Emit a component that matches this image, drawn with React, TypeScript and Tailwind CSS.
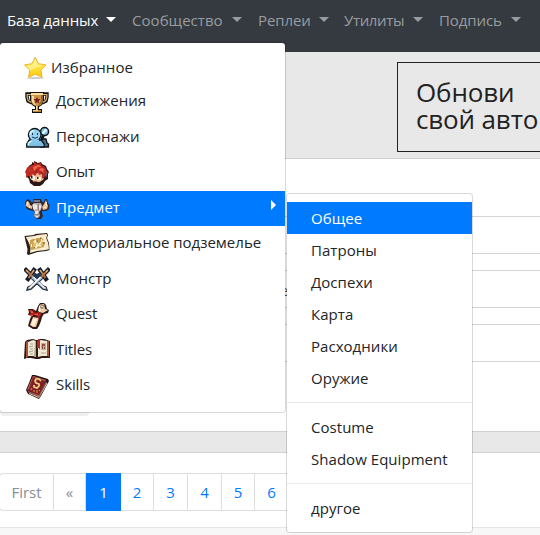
import type { ReactNode } from "react";

const nav = [
  { label: "База данных", box: "w-[125px]", text: "w-[90px] tracking-[-0.1px]", on: true },
  { label: "Сообщество", box: "w-[126px]", text: "w-[91px] tracking-[0.05px]" },
  { label: "Реплеи", box: "w-[86px]", text: "w-[52px] tracking-[-0.1px]" },
  { label: "Утилиты", box: "w-[95px]", text: "w-[60px] tracking-[-0.35px]" },
  { label: "Подпись", box: "w-[95px]", text: "w-[63px] tracking-[-0.1px]" },
];

function Sprite({ children }: { children: ReactNode }) {
  return (
    <svg className="mt-1 h-7 w-[26px] shrink-0" viewBox="0 0 26 28">
      {children}
    </svg>
  );
}

const Star = () => (
  <svg className="h-[23px] w-[23px] shrink-0" viewBox="0 0 23 23">
    <defs>
      <linearGradient id="star" x1="0" y1="0" x2="0" y2="1">
        <stop offset="0" stopColor="#fff27a" />
        <stop offset=".5" stopColor="#ffe23c" />
        <stop offset="1" stopColor="#fbc512" />
      </linearGradient>
    </defs>
    <ellipse cx="11.5" cy="22" rx="8.5" ry="1" fill="#ccc" />
    <path d="M11.2 1.300 14.5 7.7 22 8.9 16.9 14.1 18 21.3 11.2 18.2 4.6 21.3 5.7 14.1 .5 8.9 8 7.7Z" fill="url(#star)" stroke="#edb62b" strokeLinejoin="round" />
    <path d="M11.2 3.5 13.6 8.7 20 9.7Q12 10 6.5 15L2.8 9.7 8.8 8.7Z" fill="#fff9a8" opacity=".65" />
  </svg>
);

const Trophy = () => (
  <Sprite>
    <path d="M7 6H3v3l1 4 4 2M19 6h4v3l-1 4-4 2" fill="none" stroke="#111" strokeWidth="3.4" />
    <path d="M6 4h14v9l-2 4-3 2v2h3v4H8v-4h3v-2l-3-2-2-4Z" fill="#111" />
    <path d="M7 6.5H3.200v3l1 3 3 2M19 6.5h3.800v3l-1 3-3 2" fill="none" stroke="#dfb368" strokeWidth="1.2" />
    <path d="M7 5h12v8l-2 4-3 1v4h-2v-4l-3-1-2-4Z" fill="#c8954a" />
    <path d="M7 5h12v2H7ZM8 8h2v6l2 3h-1l-3-3ZM12 18h1v4h-1Z" fill="#f7dda0" />
    <path d="M17 7h2v6l-2 3-2 1v-1l2-3Z" fill="#96632c" />
    <path d="m13 9 1 2h2.500l-2 2 .6 2.500-2.100-1.200-2.100 1.200.6-2.500-2-2H12Z" fill="#7b1b1b" />
    <path d="M9 22h8v2H9Z" fill="#b98338" />
    <path d="M9 22h5v1H9Z" fill="#f3d58f" />
  </Sprite>
);

const Persona = () => (
  <Sprite>
    <path d="m17.5 15 4.500 0 1 4 1.500 1v3h-8Z" fill="#466f89" stroke="#10161d" strokeWidth="1.3" />
    <path d="m19.500 11-2 5" stroke="#10161d" strokeWidth="3" />
    <circle cx="20.600" cy="7.600" r="4" fill="#86c5e4" stroke="#10161d" strokeWidth="1.5" />
    <path d="M18.500 9.500 22.500 5.5" stroke="#f1fcff" strokeWidth="2" />
    <path d="M2.700 23v-3l2.500-4h12l3 4v3Z" fill="#80bfe4" stroke="#10161d" strokeWidth="1.3" />
    <circle cx="10.7" cy="10.800" r="6.300" fill="#95d2f2" stroke="#10161d" strokeWidth="1.3" />
    <path d="M6.500 15.500h8.500v4H6.500Z" fill="#85c6ea" />
    <path d="M6 11q0-4 4-4.500M4.500 21v-2l3-2" fill="none" stroke="#d3f3ff" strokeWidth="1.500" />
    <path d="M8 9h1v2H8ZM13 9h1v2h-1Z" fill="#12364d" />
    <path d="M8 13q3 2.500 6 0" fill="none" stroke="#12364d" />
  </Sprite>
);

const Head = () => (
  <Sprite>
    <path d="M8 5V3l2 1 0-2 4 2 3-1 1 2 4 2 1 3 2 3-1 2 0 5-3 2-2 3-3 2H10l-4-3-1-4-2-2 0-3-1-2 1-4 3-3Z" fill="#2b1618" />
    <path d="m6 15 12-2 2 2 0 5-4 3-6 0-3-3Z" fill="#eeb98c" />
    <path d="M6 16h5v5H8l-2-2ZM12 18h5v3h-4Z" fill="#fff5df" />
    <path d="m8 6 2 0V3l3 2 4-1 0 2 4 2 1 3 2 3-3 2-1 4-2-1 0-4-3 1-1-3-3 4-3-2-1 3-3-1-2 2 0-4-1-2 2-4Z" fill="#be2b23" />
    <path d="m9 8 5-2 5 2-5 0-4 4ZM15 11l2-2 4 1-2 1 1 3ZM5 12l3-3-1 4Z" fill="#ed664b" />
    <path d="m11 14 3-4M17 12l2 4M8 9l-2 4M16 6l4 3" stroke="#7e201d" strokeWidth=".8" />
    <path d="M7 16.500h1.500v3H7ZM13 18h1.500v2H13Z" fill="#2b1919" />
    <path d="M10 22h3v1h-3Z" fill="#a75d45" />
    <path d="m22 12 1 4-1 3-1-3Z" fill="#5a6474" />
  </Sprite>
);

const Armor = () => (
  <Sprite>
    <path d="m9 4 8 0 1 3 2 0 1-3 2 0 1 4 1.500 2-.5 4-3 2h-4l0 2 1 3-2 3-4 0-3-3 1-3-1-2-5-1-3-2 0-3-1-2 2-4 3 1 1 2 3 0Z" fill="#33262a" />
    <path d="m3 6 2 1 1 3 2 1 0 3-3-1-3-2 0-3ZM22 5l1 4 1 2-1 3-4 1-1-3 2-3Z" fill="#e8c09c" />
    <path d="M3 7h1v3H3ZM22 7h1v4h-1v-1h-1V9h1ZM5 11h1v2H5ZM20 12h2v1h-2Z" fill="#fff0cf" />
    <path d="m10 8 7 0 1 3-1 4-2 2 1 4-2 2-2 0-2-2 1-4-2-3-1-4Z" fill="#b5adb1" />
    <path d="m9 9 4 1v4l-3 1-1-2ZM15 10h2v3l-2 2ZM11 16h3v2l-2 2-1-1ZM12 21h2v1h-2Z" fill="#f1e7df" />
    <path d="M10 5h6v2h-6Z" fill="#777786" />
    <path d="M14 9h1v6h-1ZM11 19h4v1h-4Z" fill="#8b8087" />
  </Sprite>
);

const Map = () => (
  <Sprite>
    <path d="m.5 6 9.500-1 1-1 12-1 1 2-1 3 2 5 .5 7-3 1-9 1-9 3-1.500-1 .5-5-2-8Z" fill="#2b1c16" />
    <path d="m1.700 7 8-1 4-1 8.500-1 1 1-1 3 2 5 .8 6-3 1-9 1-7 2 .5-5-2-6Z" fill="#f9eacb" />
    <path d="m6 10 3-1 3 0-3 3 0 3 1 2 2 2-5 1-1-5ZM12 8l5-1 3 3-3 1-2 3-3-2ZM18 12h3l-1 5-4 1-4 1 2-3 3 1Z" fill="#c9a155" />
    <path d="m9 11 2 2 3 1-2 2-3 1ZM15 14l4-3-1 5Z" fill="#e1c057" />
    <path d="M4 9h3v1H4ZM11 7h5v1h-5ZM10 11h2v1h-2ZM15 13h2v1h-2ZM8 20h4v1H8ZM18 18h3v1h-3ZM12 14h1v3h-1ZM7 14h1v3H7ZM17 9h1v2h-1Z" fill="#fffbe0" />
    <path d="m5 14 1 2M16 8l1 1M10 17l1 1M20 12v2M13 11h1" stroke="#886421" />
  </Sprite>
);

const Swords = () => (
  <Sprite>
    <path d="m2 4 8 8M4 13l6-9M24 4l-8 8M22 13l-6-9" stroke="#191d28" strokeWidth="4.200" strokeLinecap="square" />
    <path d="m10 6 3 2 3-2 1 4-4 3-4-3Z" fill="#253650" />
    <path d="m2 4 7 7M4.500 12 10 4M24 4l-7 7M21.500 12 16 4" stroke="#b87747" strokeWidth="1.800" />
    <path d="m2 4 2 2M22 6l2-2M8.500 6.500 10 4M17.500 6.500 16 4" stroke="#f0c386" />
    <path d="m16 11-9 9-3 1-1 3 4-1 12-11M10 11l9 9 3 1 1 3-4-1L7 12" fill="#191d28" stroke="#191d28" strokeWidth="1.400" />
    <path d="m9 10 10 10 3 1 .5 2.500-3-.5L7 12Z" fill="#9fb6c9" />
    <path d="M9.500 11 20.500 22" stroke="#eff7fd" strokeWidth="1.200" />
    <path d="m17 10-10 10-3 1-.5 2.500 3-.5L19 12Z" fill="#a9bdce" stroke="#29313e" strokeWidth=".5" />
    <path d="m16.500 11-11 11" stroke="#fff" strokeWidth="1.500" />
  </Sprite>
);

const Scroll = () => (
  <Sprite>
    <path d="m14 5 2-3 4 0 2 2 1 4 2 1-1 3-4 1-2 3-1 4-2 5-2 3-4 0-5-3 2-7 2-4-4 0 1-3-1-3 5 0 3 2Z" fill="#2e1916" />
    <path d="m15 5 2-2 3 0 1 5 3 1-5 3-4-1ZM9 16l6 1-3 9H9l-3-2Z" fill="#efcda9" />
    <path d="m15 5 2 1-1 5-2-1ZM9 18l4 0-3 7-3-1Z" fill="#fff3dc" />
    <path d="m17 3 3 1-1 4-3-1Z" fill="#8f8174" />
    <path d="M17 5h2v1h-2Z" fill="#f1d8bc" />
    <path d="m5 9 4 0 2 3 3-1 4 2-2 2-1 4-2-4-3-1-4 1-1-1 2-2Z" fill="#b3221b" />
    <path d="m6 9 3 2v1H7ZM11 13h3v1h-3ZM6 14l3 0v1H7Z" fill="#f25b3e" />
  </Sprite>
);

const Book = () => (
  <Sprite>
    <path d="m1 5 2-2 6-1 3 1h2l2-1h4l3 1 3 1v17h-3l-5 0-3 1h-3l-5-1-4 0-3 1Z" fill="#2e1915" />
    <path d="m2 5 2-1v16l-2 1ZM23 4h2v16l-2-1Z" fill="#a35435" />
    <path d="m4 5 5-2 3 1v16l-3-1-5 0ZM14 4l3-1 6 1v15h-5l-4 1Z" fill="#eee8d5" />
    <path d="m11 4 1 0v16l-2-1Z" fill="#b7aa8d" />
    <path d="m6 7 3 0M5 10l4-1M6 12h3M5 15l4-1M6 17h3M17 16h5" stroke="#aaa591" />
    <path d="M17 6h5v7h-5Z" fill="#d7a783" />
    <path d="M18 7h3v2h-2v3h-1ZM20 10h1v2h-1Z" fill="#895444" />
    <path d="M14 2h2v11l-1-2h-2V4h1Z" fill="#b92824" />
  </Sprite>
);

const Skills = () => (
  <Sprite>
    <path d="m8 3 3 0 13 4 1 2-8 15-2 3-11-5-2-4 3-7Z" fill="#241315" />
    <path d="m9 4 13 4-7 15L3 18Z" fill="#812127" />
    <path d="m9 4 13 4-1 1L9 5 5 17l-2 1ZM4 19l11 4 7-14v2l-7 14-11-5Z" fill="#b75c55" />
    <path d="m5 21 10 4 8-15v2l-8 14-10-4Z" fill="#ead8bc" />
    <path d="m17 9-2-2h-3l-1 2 1 2 3 1 0 2-2 2-3-1v-2" fill="none" stroke="#f4d482" strokeWidth="1.7" />
    <path d="m7 18 1-2M10 20v-2M13 21v-3M15 19l1-1" stroke="#d49b43" />
  </Sprite>
);

const menu = [
  { label: "Достижения", icon: <Trophy />, row: "h-9", track: "tracking-[0.03px]" },
  { label: "Персонажи", icon: <Persona />, row: "h-[35px]", track: "tracking-[0.05px]" },
  { label: "Опыт", icon: <Head />, row: "h-9", track: "tracking-[-0.2px]" },
  { label: "Предмет", icon: <Armor />, row: "h-[35px]", track: "tracking-[0.05px]", on: true },
  { label: "Мемориальное подземелье", icon: <Map />, row: "h-9", track: "" },
  { label: "Монстр", icon: <Swords />, row: "h-[35px]", track: "" },
  { label: "Quest", icon: <Scroll />, row: "h-9", track: "tracking-[-0.1px]" },
  { label: "Titles", icon: <Book />, row: "h-[35px]", track: "tracking-[-0.1px]" },
  { label: "Skills", icon: <Skills />, row: "h-9", track: "tracking-[-0.1px]" },
];

const groups = [
  ["Общее", "Патроны", "Доспехи", "Карта", "Расходники", "Оружие"],
  ["Costume", "Shadow Equipment"],
  ["другое"],
];

const pages = [
  ["First", "w-[55px] text-[#868e96]"],
  ["«", "w-[32px] text-[#868e96]"],
  ["1", "w-[35px] bg-[#007bff] pl-px text-white"],
  ["2", "w-[33px] text-[#007bff]"],
  ["3", "w-[34px] text-[#007bff]"],
  ["4", "w-[34px] text-[#007bff]"],
  ["5", "w-[33px] text-[#007bff]"],
  ["6", "w-[33px] pl-px text-[#007bff]"],
];

export default function App() {
  return (
    <div className="relative h-[535px] w-[540px] overflow-hidden bg-white font-['Open_Sans','Noto_Sans',sans-serif] text-[15px] leading-6 text-[#212529]">
      <header className="flex h-[52px] bg-[#343a40] pl-[7px] pt-2">
        {nav.map((n) => (
          <div key={n.label} className={`flex h-6 shrink-0 ${n.box} ${n.on ? "text-white" : "text-[#999c9f]"}`}>
            <span className={`whitespace-nowrap ${n.text}`}>{n.label}</span>
            <i className="ml-[9px] mt-[9px] h-0 w-0 border-x-[5px] border-t-[5px] border-x-transparent border-t-current" />
          </div>
        ))}
      </header>
      <section className="h-[107px] border-b border-[#d0d0d0] bg-[#e8e8e8] pl-[397px] pt-[10px]">
        <div className="h-[90px] w-[180px] whitespace-pre border border-[#222] pl-[18px] pt-4 text-[26px] leading-[27px] tracking-[-0.15px] text-[#222]">
          {"Обнови\nсвой авто"}
        </div>
      </section>
      <section className="h-[272px] pt-[57px]">
        <div className="-mx-px mb-4 h-[38px] border border-[#d4d4d4]" />
        <div className="-mx-px mb-4 h-[38px] border border-[#d4d4d4] pl-[280px] pt-[7px] text-[#495057]">е</div>
        <div className="-mx-px mb-4 h-[38px] border border-[#d4d4d4]" />
        <div className="h-[38px] w-[89px] rounded bg-[#efefef]" />
      </section>
      <div className="h-[22px] border-y border-[#d0d0d0] bg-[#e8e8e8]" />
      <div className="-ml-px mt-5 flex h-[38px]">
        {pages.map(([label, style], i) => (
          <span key={label} className={`flex items-center justify-center border-y border-r ${i === 0 ? "rounded-l border-l" : ""} ${label === "1" ? "border-[#007bff]" : "border-[#dedede]"} ${style}`}>
            {label}
          </span>
        ))}
      </div>
      <footer className="mt-4 h-[10px] border-t border-[#e7e7e7] bg-[#f7f7f7]" />

      <nav className="absolute -left-px top-[42px] w-[287px] rounded border border-black/15 bg-white bg-clip-padding pb-2 pt-2">
        <div className="flex h-[33px] items-center gap-1 pl-6">
          <Star />
          <span className="-mt-0.5 tracking-[0.05px]">Избранное</span>
        </div>
        {menu.map((m) => (
          <div key={m.label} className={`flex items-start pl-6 ${m.row} ${m.on ? "bg-[#007bff] text-white" : ""}`}>
            {m.icon}
            <span className={`ml-1.5 mt-1 whitespace-nowrap ${m.track}`}>{m.label}</span>
            {m.on && <i className="ml-auto mr-[9px] mt-[9px] h-0 w-0 border-y-[5px] border-l-[5px] border-y-transparent border-l-white" />}
          </div>
        ))}
      </nav>

      <nav className="absolute left-[286px] top-[193px] w-[187px] rounded border border-black/15 bg-white bg-clip-padding py-2">
        {groups.map((g, gi) => (
          <div key={gi} className={gi ? "mt-2 border-t border-[#e9ecef] pt-2" : ""}>
            {g.map((t) => (
              <div key={t} className={`h-8 whitespace-nowrap py-1 pl-6 tracking-[0.04px] ${t === "Общее" ? "bg-[#007bff] text-white" : ""}`}>{t}</div>
            ))}
          </div>
        ))}
      </nav>
    </div>
  );
}
